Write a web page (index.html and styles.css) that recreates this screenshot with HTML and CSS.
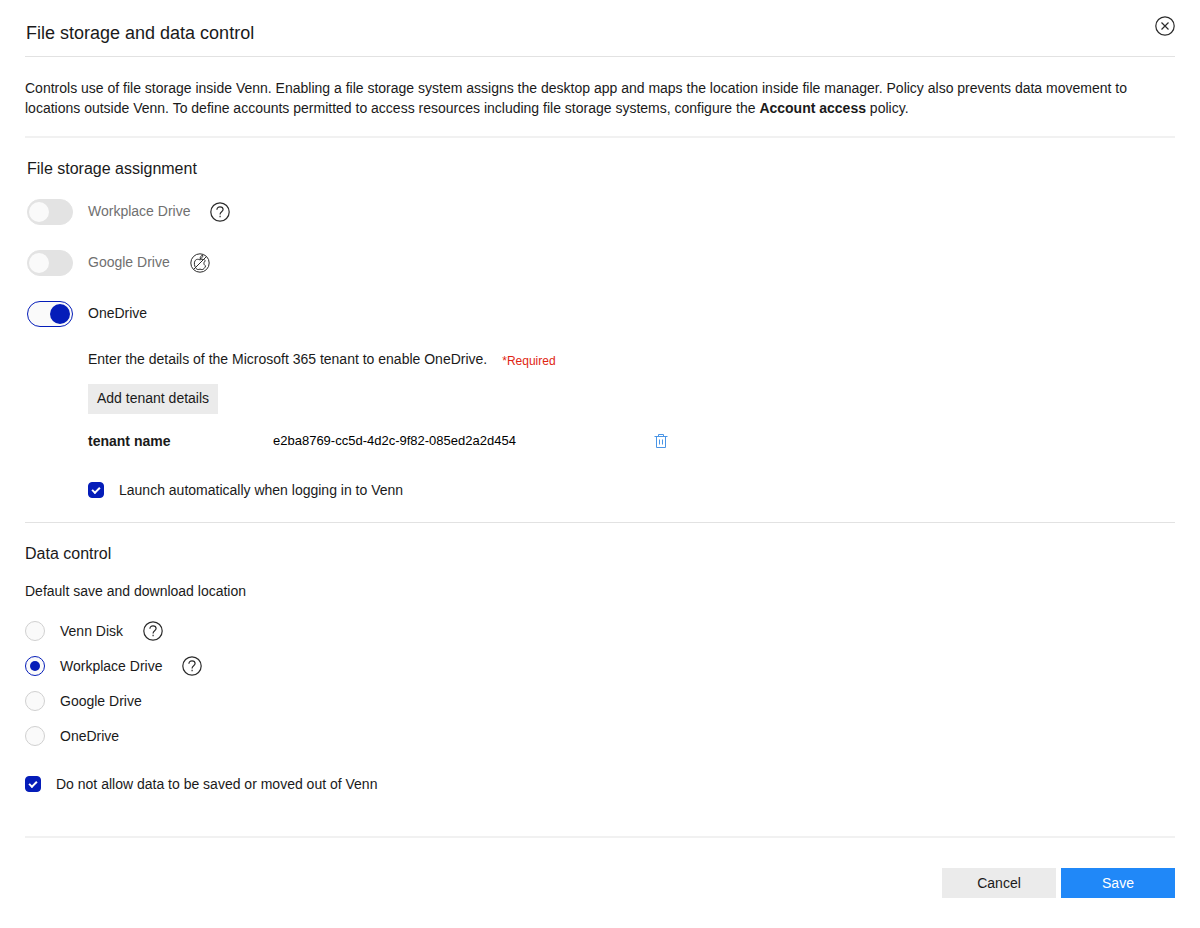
FILE: index.html
```html
<!DOCTYPE html>
<html lang="en">
<head>
<meta charset="utf-8">
<meta name="viewport" content="width=device-width, initial-scale=1">
<title>File storage and data control</title>
<link rel="stylesheet" href="styles.css">
</head>
<body>
<svg class="defs" aria-hidden="true">
  <symbol id="help" viewBox="0 0 20 20">
    <circle cx="10" cy="10" r="9.2"/>
    <path d="M6.9 7.800c0-1.900 1.300-3 3.100-3s3.100 1.100 3.100 2.800c0 2.200-3 2.300-3 4.700v.3M10.100 13.800v1.500"/>
  </symbol>
</svg>
<form class="policy">
  <header class="header">
    <h1 class="title">File storage and data control</h1>
    <button class="icon-button" type="button" aria-label="Close">
      <svg class="icon" viewBox="0 0 20 20"><circle cx="10" cy="10" r="9.2"/><path d="M6.500 6.500l7 7M13.500 6.500l-7 7"/></svg>
    </button>
  </header>

  <p class="intro">Controls use of file storage inside Venn. Enabling a file storage system assigns the desktop app and maps the location inside file manager. Policy also prevents data movement to locations outside Venn. To define accounts permitted to access resources including file storage systems, configure the <b>Account access</b> policy.</p>

  <section class="section assignment">
    <h2 class="subtitle">File storage assignment</h2>
    <div class="toggles">
      <div class="row">
        <input class="toggle" type="checkbox" role="switch" id="t-workplace" disabled>
        <label class="toggle-label muted" for="t-workplace">Workplace Drive</label>
        <button class="icon-button" type="button" aria-label="About Workplace Drive"><svg class="icon"><use href="#help"/></svg></button>
      </div>
      <div class="row">
        <input class="toggle" type="checkbox" role="switch" id="t-google" disabled>
        <label class="toggle-label muted" for="t-google">Google Drive</label>
        <button class="icon-button" type="button" aria-label="Not available on Mac">
          <svg class="icon fine" viewBox="0 0 20 20"><circle cx="10" cy="10" r="9.2"/><path d="M3.500 16.500L16.500 3.500M10 6.900C8.300 6 6.500 6 5.300 7.400c-1.700 2-1 5.800.8 8.100 1 1.300 2.200 1.200 3.900.6 1.700.6 2.900.8 4-.5.800-.8 1.300-1.800 1.600-2.700-2.200-1.100-2.200-3.900-.2-5.100C14.100 6 12 6 10 6.900zM10.100 5.600c0-1.900 1.200-3.200 2.800-3.400 0 1.900-1.200 3.200-2.800 3.400z"/></svg>
        </button>
      </div>
      <div class="row">
        <input class="toggle" type="checkbox" role="switch" id="t-onedrive" checked>
        <label class="toggle-label" for="t-onedrive">OneDrive</label>
      </div>
    </div>

    <div class="details">
      <p class="prompt">Enter the details of the Microsoft 365 tenant to enable OneDrive. <span class="required">*Required</span></p>
      <button class="button add" type="button">Add tenant details</button>
      <div class="tenant">
        <b>tenant name</b>
        <span class="tenant-id">e2ba8769-cc5d-4d2c-9f82-085ed2a2d454</span>
        <button class="icon-button trash" type="button" aria-label="Delete tenant">
          <svg class="trash-icon" viewBox="0 0 14 16"><path d="M.5 3.500h13M4.500 3.500v-2h5v2M2.500 3.500v11h9V3.500M5.500 6.500v5M8.500 6.500v5"/></svg>
        </button>
      </div>
      <div class="row check-row">
        <input class="check" type="checkbox" id="launch" checked>
        <label for="launch">Launch automatically when logging in to Venn</label>
      </div>
    </div>
  </section>

  <section class="section control">
    <h2 class="subtitle">Data control</h2>
    <fieldset class="locations">
      <legend class="legend">Default save and download location</legend>
      <div class="radios">
        <div class="row">
          <input class="radio" type="radio" name="location" id="r-disk">
          <label class="radio-label" for="r-disk">Venn Disk</label>
          <button class="icon-button" type="button" aria-label="About Venn Disk"><svg class="icon"><use href="#help"/></svg></button>
        </div>
        <div class="row">
          <input class="radio" type="radio" name="location" id="r-workplace" checked>
          <label class="radio-label" for="r-workplace">Workplace Drive</label>
          <button class="icon-button" type="button" aria-label="About Workplace Drive location"><svg class="icon"><use href="#help"/></svg></button>
        </div>
        <div class="row">
          <input class="radio" type="radio" name="location" id="r-google">
          <label class="radio-label" for="r-google">Google Drive</label>
        </div>
        <div class="row">
          <input class="radio" type="radio" name="location" id="r-onedrive">
          <label class="radio-label" for="r-onedrive">OneDrive</label>
        </div>
      </div>
    </fieldset>
    <div class="row check-row">
      <input class="check" type="checkbox" id="block" checked>
      <label for="block">Do not allow data to be saved or moved out of Venn</label>
    </div>
  </section>

  <footer class="footer">
    <button class="button action" type="button">Cancel</button>
    <button class="button action primary" type="submit">Save</button>
  </footer>
</form>
</body>
</html>
```
FILE: styles.css
```css
* { box-sizing: border-box; }
body {
  margin: 0;
  background: #fff;
  color: #1a1a1a;
  font: 14px/20px "Liberation Sans", Arial, Helvetica, sans-serif;
}
h1, h2, p, fieldset { margin: 0; padding: 0; border: 0; font-weight: 400; }
button { font: inherit; color: inherit; }
.defs { display: none; }

.policy { padding: 16px 25px 30px; }
.header {
  display: flex;
  justify-content: space-between;
  align-items: flex-start;
  padding-bottom: 13px;
  border-bottom: 1px solid #e2e2e2;
}
.title { padding: 7px 0 0 1px; font-size: 18px; line-height: 20px; }
.intro { padding: 21px 0 18px; border-bottom: 2px solid #f1f1f1; }
.section { padding-top: 21px; }
.subtitle { font-size: 16px; line-height: 20px; }
.row { display: flex; align-items: center; }

.icon-button {
  display: flex;
  flex: none;
  padding: 0;
  border: 0;
  background: none;
  cursor: pointer;
}
.icon {
  width: 20px;
  height: 20px;
  fill: none;
  stroke: #2b2b2b;
  stroke-width: 1.2;
}
.fine { stroke-width: 1; }

.assignment { padding-bottom: 22px; border-bottom: 1px solid #e2e2e2; }
.assignment > .subtitle, .toggles { padding-left: 2px; }
.toggles { display: grid; gap: 25px; margin-top: 20px; }
.toggle {
  appearance: none;
  display: flex;
  align-items: center;
  width: 46px;
  height: 26px;
  margin: 0 15px 0 0;
  padding: 2px;
  border: 1px solid #e3e3e3;
  border-radius: 13px;
  background: #e3e3e3;
}
.toggle::before {
  content: "";
  width: 20px;
  height: 20px;
  border-radius: 50%;
  background: #fafafa;
}
.toggle:disabled { padding: 0 1px; }
.toggle:checked { justify-content: flex-end; border-color: #051db9; background: #fafafa; }
.toggle:checked::before { background: #051db9; }
.toggle-label { padding-bottom: 2px; margin-right: 20px; }
.muted { color: #707070; }

.details { margin-top: 22px; padding-left: 63px; }
.prompt { display: flex; gap: 15px; }
.required { padding-top: 4px; font-size: 12px; line-height: 16px; color: #e02512; }
.button {
  height: 30px;
  padding: 0 9px;
  border: 0;
  background: #ebebeb;
  cursor: pointer;
}
.add { display: block; margin-top: 15px; padding-bottom: 2px; }
.tenant {
  display: grid;
  grid-template-columns: 185px 381px auto;
  justify-content: start;
  align-items: center;
  margin-top: 17px;
}
.tenant-id { font-size: 13px; color: #000; }
.trash-icon {
  width: 14px;
  height: 16px;
  fill: none;
  stroke: #4a95e6;
  stroke-width: 1;
}
.check-row { gap: 15px; }
.details .check-row { margin-top: 29px; }
.check {
  appearance: none;
  display: grid;
  place-items: center;
  width: 16px;
  height: 16px;
  margin: 0;
  border: 1px solid #051db9;
  border-radius: 4px;
}
.check:checked { background: #051db9; }
.check:checked::before {
  content: "";
  box-sizing: border-box;
  width: 8px;
  height: 5px;
  margin-bottom: 2px;
  border: solid #fff;
  border-width: 0 0 2px 2px;
  rotate: -45deg;
}

.locations { margin-top: 17px; }
.legend { padding: 0; }
.radios { display: grid; gap: 15px; margin-top: 20px; }
.radio {
  appearance: none;
  display: grid;
  place-items: center;
  width: 20px;
  height: 20px;
  margin: 0 15px 0 0;
  border: 1px solid #d0d0d0;
  border-radius: 50%;
  background: #fafafa;
}
.radio:checked { border-color: #051db9; }
.radio:checked::before {
  content: "";
  width: 10px;
  height: 10px;
  border-radius: 50%;
  background: #051db9;
}
.radio-label { margin-right: 20px; }
.control { padding-bottom: 42px; border-bottom: 2px solid #f1f1f1; }
.control .check-row { margin-top: 28px; }

.footer { display: flex; justify-content: flex-end; gap: 5px; padding-top: 30px; }
.action { width: 114px; }
.primary { background: #2088f8; color: #fff; }
```
